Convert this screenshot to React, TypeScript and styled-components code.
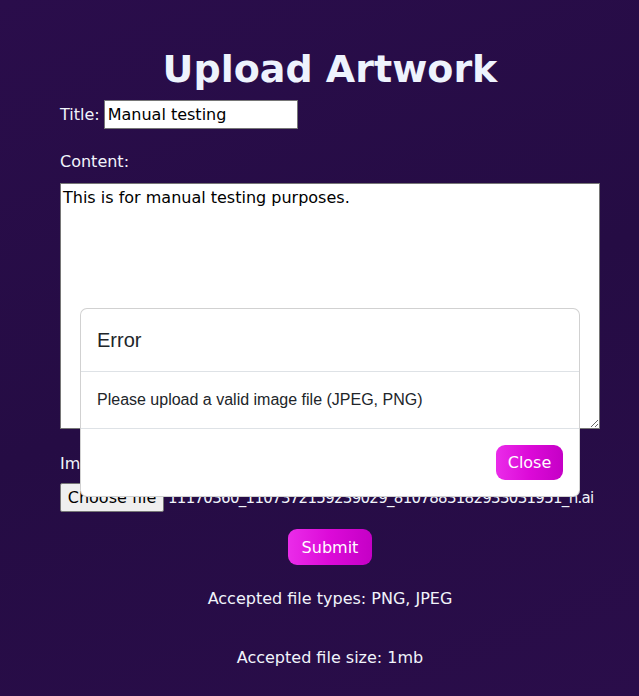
import styled, { createGlobalStyle } from 'styled-components';

const GlobalStyle = createGlobalStyle`
  html, body {
    margin: 0;
    padding: 0;
  }
  body {
    min-height: 696px;
    background: linear-gradient(160deg, #2a0d4b 0%, #250c44 50%, #2a0d4a 100%);
    font-family: 'DejaVu Sans', 'Open Sans', sans-serif;
    color: #f1f4fb;
  }
`;

const Page = styled.main`
  position: relative;
  height: 696px;
  padding: 46px 0 0 60px;
  box-sizing: border-box;
  overflow: hidden;
`;

const Form = styled.form`
  display: flex;
  flex-direction: column;
  width: 540px;
`;

const Heading = styled.h1`
  margin: 0;
  text-align: center;
  font-size: 38px;
  font-weight: 700;
  line-height: 46px;
  color: #eef3fd;
`;

const InlineField = styled.label`
  display: flex;
  align-items: center;
  gap: 4px;
  font-size: 16px;
  margin-top: 8px;
`;

const Label = styled.label<{ $top: number }>`
  display: block;
  font-size: 16px;
  margin-top: ${({ $top }) => $top}px;
`;

const TextInput = styled.input`
  width: 194px;
  height: 29px;
  box-sizing: border-box;
  border: 1px solid #767676;
  padding: 1px 3px;
  font: 16px 'DejaVu Sans', sans-serif;
  color: #000;
  background: #fff;
`;

const TextArea = styled.textarea`
  width: 540px;
  height: 246px;
  box-sizing: border-box;
  margin-top: 12px;
  border: 1px solid #767676;
  padding: 4px 2px;
  font: 16px/1.3 'DejaVu Sans', sans-serif;
  color: #000;
  background: #fff;
`;

const FileRow = styled.div`
  display: flex;
  align-items: center;
  gap: 4px;
  margin-top: 10px;
  white-space: nowrap;
`;

const FileButton = styled.button`
  height: 29px;
  width: 104px;
  padding: 0 6px;
  border: 1px solid #767676;
  border-radius: 2px;
  background: #efefef;
  color: #000;
  font: 16px 'DejaVu Sans', sans-serif;
  white-space: nowrap;
  overflow: hidden;
`;

const FileName = styled.span`
  font-size: 15px;
  letter-spacing: -0.7px;
  color: #f1f4fb;
`;

const GradientButton = styled.button`
  border: none;
  border-radius: 9px;
  background: linear-gradient(90deg, #ea2ce9 0%, #dc0ad8 50%, #c500c6 100%);
  color: #fff;
  font: 16px 'DejaVu Sans', sans-serif;
  cursor: pointer;
`;

const SubmitButton = styled(GradientButton)`
  align-self: center;
  width: 84px;
  height: 36px;
  margin-top: 17px;
`;

const Note = styled.p<{ $top: number }>`
  margin: ${({ $top }) => $top}px 0 0;
  text-align: center;
  font-size: 16px;
  line-height: 20px;
`;

const Modal = styled.div`
  position: absolute;
  left: 80px;
  top: 308px;
  width: 500px;
  background: #fff;
  border: 1px solid rgba(0, 0, 0, 0.18);
  border-radius: 7px;
  box-sizing: border-box;
  color: #212529;
  font-family: 'Liberation Sans', Arial, sans-serif;
`;

const ModalHeader = styled.div`
  padding: 16px;
  border-bottom: 1px solid #dee2e6;
`;

const ModalTitle = styled.h5`
  margin: 0;
  font-size: 20px;
  font-weight: 500;
  line-height: 30px;
`;

const ModalBody = styled.div`
  padding: 16px;
  font-size: 16px;
  line-height: 24px;
  border-bottom: 1px solid #dee2e6;
`;

const ModalFooter = styled.div`
  display: flex;
  justify-content: flex-end;
  padding: 12px;
`;

const CloseButton = styled(GradientButton)`
  width: 67px;
  height: 35px;
  margin: 4px;
`;

export default function App() {
  return (
    <>
      <GlobalStyle />
      <Page>
        <Form onSubmit={(e) => e.preventDefault()}>
          <Heading>Upload Artwork</Heading>
          <InlineField>
            Title:
            <TextInput defaultValue="Manual testing" />
          </InlineField>
          <Label $top={23}>Content:</Label>
          <TextArea defaultValue="This is for manual testing purposes." />
          <Label $top={25}>Image:</Label>
          <FileRow>
            <FileButton type="button">Choose file</FileButton>
            <FileName>11170360_1107372159239029_8107883182933031951_n.ai</FileName>
          </FileRow>
          <SubmitButton type="submit">Submit</SubmitButton>
          <Note $top={24}>Accepted file types: PNG, JPEG</Note>
          <Note $top={39}>Accepted file size: 1mb</Note>
        </Form>
        <Modal role="dialog">
          <ModalHeader>
            <ModalTitle>Error</ModalTitle>
          </ModalHeader>
          <ModalBody>Please upload a valid image file (JPEG, PNG)</ModalBody>
          <ModalFooter>
            <CloseButton type="button">Close</CloseButton>
          </ModalFooter>
        </Modal>
      </Page>
    </>
  );
}
